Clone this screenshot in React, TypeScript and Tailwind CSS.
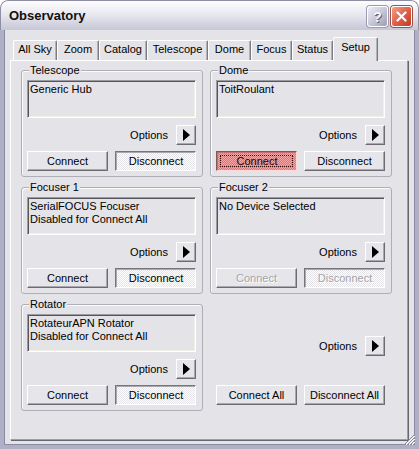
import React from 'react';

type BtnState = 'normal' | 'pressed' | 'red' | 'disabled' | 'disabledPressed';

const DlgButton: React.FC<{ label: string; state?: BtnState }> = ({ label, state = 'normal' }) => {
    if (state === 'pressed' || state === 'disabledPressed') {
        return (
            <div className="h-[20px] w-[81px] flex items-center justify-center border border-t-[#76767c] border-l-[#76767c] border-r-white border-b-white shadow-[inset_1px_1px_0_#a9a9b0] bg-[image:repeating-conic-gradient(#ffffff_0%_25%,#e3e3e8_0%_50%)] bg-[length:2px_2px]">
                <span className={state === 'pressed' ? 'pt-[1px] pl-[1px]' : 'pt-[1px] pl-[1px] text-[#a3a3aa] [text-shadow:1px_1px_0_#ffffff]'}>{label}</span>
            </div>
        );
    }
    if (state === 'red') {
        return (
            <div className="relative h-[20px] w-[81px] flex items-center justify-center border border-t-[#7c5a5a] border-l-[#7c5a5a] border-r-[#ffd8d8] border-b-[#ffd8d8] shadow-[inset_1px_1px_0_#c27070] bg-[image:repeating-conic-gradient(#f8a4a4_0%_25%,#ee6e6e_0%_50%)] bg-[length:2px_2px]">
                <span className="pt-[1px] pl-[1px] text-[#2a0000]">{label}</span>
                <div className="absolute inset-[3px] border border-dotted border-[#3a1010]" />
            </div>
        );
    }
    return (
        <div className="h-[20px] w-[81px] flex items-center justify-center border border-t-white border-l-white border-r-[#6c6c72] border-b-[#6c6c72] shadow-[inset_-1px_-1px_0_#a8a8b0] bg-[#e6e6ea]">
            <span className={state === 'disabled' ? 'text-[#a3a3aa] [text-shadow:1px_1px_0_#ffffff]' : ''}>{label}</span>
        </div>
    );
};

const OptionsRow: React.FC = () => (
    <div className="flex items-center justify-end gap-[8px] h-[20px]">
        <span>Options</span>
        <div className="h-[20px] w-[20px] flex items-center justify-center border border-t-white border-l-white border-r-[#6c6c72] border-b-[#6c6c72] shadow-[inset_-1px_-1px_0_#a8a8b0] bg-[#e6e6ea]">
            <svg width="7" height="12" viewBox="0 0 7 12" className="ml-[1px]">
                <polygon points="0,0 7,6 0,12" fill="#000000" />
            </svg>
        </div>
    </div>
);

const Group: React.FC<{ title: string; lines: string[]; connect?: BtnState; disconnect?: BtnState }> = ({
    title,
    lines,
    connect = 'normal',
    disconnect = 'pressed',
}) => (
    <div className="relative h-[107px] w-[182px] rounded-[3px] border border-[#aeaeb6] shadow-[inset_1px_1px_0_#fbfbfd] pl-[5px] pr-[6px] pt-[9px] flex flex-col">
        <span className="absolute -top-[7px] left-[7px] px-[1px] bg-[#e3e3e8] leading-[13px]">{title}</span>
        <div className="h-[38px] border border-t-[#9a9aa0] border-l-[#9a9aa0] border-b-white border-r-white shadow-[inset_1px_1px_0_#55555c,inset_-1px_-1px_0_#f1f0e6] px-[2px] pt-[2px] leading-[13px]">
            {lines.map((l) => (
                <div key={l}>{l}</div>
            ))}
        </div>
        <div className="mt-[7px]">
            <OptionsRow />
        </div>
        <div className="mt-[6px] flex justify-between">
            <DlgButton label="Connect" state={connect} />
            <DlgButton label="Disconnect" state={disconnect} />
        </div>
    </div>
);

const tabs = [
    { name: 'All Sky', w: 'w-[44px]' },
    { name: 'Zoom', w: 'w-[42px]' },
    { name: 'Catalog', w: 'w-[48px]' },
    { name: 'Telescope', w: 'w-[61px]' },
    { name: 'Dome', w: 'w-[43px]' },
    { name: 'Focus', w: 'w-[41px]' },
    { name: 'Status', w: 'w-[41px]' },
];

export default function App() {
    return (
        <div className="relative w-[419px] h-[449px] flex flex-col overflow-hidden rounded-t-[8px] bg-[#e3e3e8] text-[11px] text-black font-['Liberation_Sans',Arial,sans-serif]">
            {/* title bar */}
            <div className="h-[30px] shrink-0 flex items-center pl-[8px] pr-[6px] rounded-t-[8px] border border-b-0 border-[#8e8ea4] bg-linear-to-b from-[#fdfdfe] via-[#e6e6ee] to-[#c6c6d6]">
                <span className="font-bold text-[13px] leading-[16px] text-[#111111] pt-[1px]">Observatory</span>
                <div className="ml-auto flex gap-[3px] pt-[2px]">
                    <div className="w-[21px] h-[21px] rounded-[3px] border border-white shadow-[0_0_0_1px_#9a9ab0] bg-linear-to-br from-[#eeeef6] via-[#c8c8da] to-[#9c9cb6] flex items-center justify-center">
                        <span className="font-bold text-[14px] leading-[14px] text-[#f6f6fa] [text-shadow:1px_1px_0_#5e5e78]">?</span>
                    </div>
                    <div className="w-[21px] h-[21px] rounded-[3px] border border-white shadow-[0_0_0_1px_#a05040] bg-linear-to-br from-[#f0a08c] via-[#e0604a] to-[#c03a26] flex items-center justify-center">
                        <svg width="11" height="11" viewBox="0 0 11 11">
                            <path d="M1.5 1.5 L9.5 9.5 M9.5 1.5 L1.5 9.5" stroke="#ffffff" strokeWidth="2.2" strokeLinecap="round" />
                        </svg>
                    </div>
                </div>
            </div>

            {/* body */}
            <div className="flex-1 flex flex-col border-x-4 border-b-4 border-[#b0b0c4] shadow-[inset_1px_0_0_#8a8aa2,inset_-1px_0_0_#8a8aa2,inset_0_-1px_0_#8a8aa2] pl-[6px] pt-[7px]">
                {/* tabs */}
                <div className="h-[23px] flex items-end pl-[3px]">
                    {tabs.map((t) => (
                        <div
                            key={t.name}
                            className={`${t.w} h-[20px] rounded-t-[2px] border border-b-0 border-t-white border-l-white border-r-[#7a7a82] shadow-[inset_-1px_0_0_#b2b2ba] text-center pt-[2px] leading-[13px]`}
                        >
                            {t.name}
                        </div>
                    ))}
                    <div className="relative z-10 w-[45px] h-[24px] -mb-[1px] rounded-t-[2px] border border-b-0 border-t-white border-l-white border-r-[#7a7a82] shadow-[inset_-1px_0_0_#b2b2ba] bg-[#e3e3e8] text-center pt-[3px] leading-[13px]">
                        Setup
                    </div>
                </div>

                {/* panel */}
                <div className="w-[398px] h-[380px] border border-t-white border-l-white border-r-[#9d9da5] border-b-[#9d9da5] shadow-[1px_1px_0_#66666e] pl-[10px] pt-[9px]">
                    <div className="grid grid-cols-[182px_182px] gap-x-[7px] gap-y-[10px]">
                        <Group title="Telescope" lines={['Generic Hub']} />
                        <Group title="Dome" lines={['ToitRoulant']} connect="red" disconnect="normal" />
                        <Group title="Focuser 1" lines={['SerialFOCUS Focuser', 'Disabled for Connect All']} />
                        <Group title="Focuser 2" lines={['No Device Selected']} connect="disabled" disconnect="disabledPressed" />
                        <Group title="Rotator" lines={['RotateurAPN Rotator', 'Disabled for Connect All']} />
                        <div className="h-[107px] pl-[6px] pr-[7px] pt-[32px] flex flex-col">
                            <OptionsRow />
                            <div className="mt-[29px] flex justify-between">
                                <DlgButton label="Connect All" />
                                <DlgButton label="Disconnect All" />
                            </div>
                        </div>
                    </div>
                </div>
            </div>

            {/* size grip */}
            <svg width="12" height="12" viewBox="0 0 12 12" className="absolute right-[4px] bottom-[4px]">
                <path d="M11 2 L2 11 M11 5 L5 11 M11 8 L8 11" stroke="#8a8aa0" strokeWidth="1" />
                <path d="M12 3 L3 12 M12 6 L6 12 M12 9 L9 12" stroke="#ffffff" strokeWidth="1" />
            </svg>
        </div>
    );
}
